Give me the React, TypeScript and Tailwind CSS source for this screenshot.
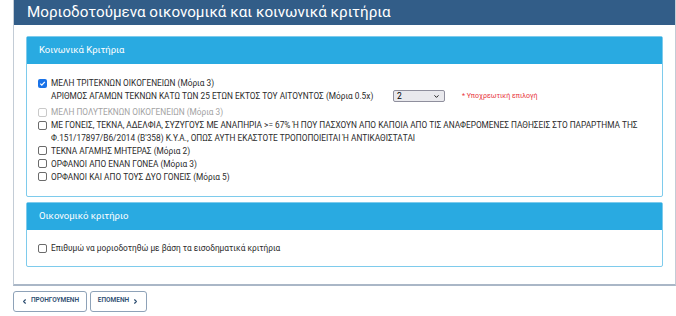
import { ChevronDown, ChevronLeft, ChevronRight } from 'lucide-react';
import type { ReactNode } from 'react';

const FONT = "font-['Roboto','Liberation_Sans',sans-serif]";

function Box({ checked, disabled }: { checked?: boolean; disabled?: boolean }) {
    if (checked) {
        return (
            <span className="mt-[1.5px] flex h-[9px] w-[9px] shrink-0 items-center justify-center rounded-[2px] bg-[#1a73e8]">
                <svg width="7" height="7" viewBox="0 0 10 10">
                    <path d="M1.8 5.2 L4 7.3 L8.3 2.6" fill="none" stroke="white" strokeWidth="1.8" />
                </svg>
            </span>
        );
    }
    return (
        <span
            className={`mt-[1.5px] h-[9px] w-[9px] shrink-0 rounded-[2px] border bg-white ${
                disabled ? 'border-[#c9c9c9]' : 'border-[#6b6b6b]'
            }`}
        />
    );
}

function Row({ checked, disabled, children }: { checked?: boolean; disabled?: boolean; children: ReactNode }) {
    return (
        <div className="flex items-start gap-[4px]">
            <Box checked={checked} disabled={disabled} />
            <span className={`whitespace-nowrap ${disabled ? 'text-[#a3a3a3]' : 'text-[#2b2b2b]'}`}>{children}</span>
        </div>
    );
}

function Panel({ title, children }: { title: string; children: ReactNode }) {
    return (
        <div className="rounded-[2px] border border-[#7ecbec]">
            <div className="flex h-[27px] items-center bg-[#29aae1] pl-[12px] text-[9.5px] text-white">{title}</div>
            {children}
        </div>
    );
}

export default function App() {
    return (
        <div className={`h-[316px] w-[676px] overflow-hidden bg-white ${FONT}`}>
            <div className="ml-[13px] border-x border-b-2 border-[#c3ccd6] border-b-[#aab7c7]">
                <div className="flex h-[25px] items-center bg-[#325d88] pl-[13px] text-[15.2px] text-white">
                    Μοριοδοτούμενα οικονομικά και κοινωνικά κριτήρια
                </div>
                <div className="flex flex-col gap-[5px] px-[12px] pb-[17px] pt-[11px]">
                    <Panel title="Κοινωνικά Κριτήρια">
                        <div className="flex flex-col gap-[0.5px] px-[11px] pb-[13px] pt-[13px] text-[8.3px] leading-[12.5px]">
                            <Row checked>ΜΕΛΗ ΤΡΙΤΕΚΝΩΝ ΟΙΚΟΓΕΝΕΙΩΝ (Μόρια 3)</Row>
                            <div className="mb-[3px] flex items-center pl-[13px] text-[#2b2b2b]">
                                <span className="w-[342px] whitespace-nowrap">
                                    ΑΡΙΘΜΟΣ ΑΓΑΜΩΝ ΤΕΚΝΩΝ ΚΑΤΩ ΤΩΝ 25 ΕΤΩΝ ΕΚΤΟΣ ΤΟΥ ΑΙΤΟΥΝΤΟΣ (Μόρια 0.5x)
                                </span>
                                <div className="flex h-[12px] w-[52px] items-center justify-between rounded-[2px] border border-[#8f8f9d] bg-[#e9e9ed] pl-[3px] pr-[4px] text-[8.5px] text-black">
                                    <span>2</span>
                                    <ChevronDown size={7} strokeWidth={3} />
                                </div>
                                <span className="ml-[17px] text-[7px] text-[#e8343c]">* Υποχρεωτική επιλογή</span>
                            </div>
                            <Row disabled>ΜΕΛΗ ΠΟΛΥΤΕΚΝΩΝ ΟΙΚΟΓΕΝΕΙΩΝ (Μόρια 3)</Row>
                            <Row>
                                ΜΕ ΓΟΝΕΙΣ, ΤΕΚΝΑ, ΑΔΕΛΦΙΑ, ΣΥΖΥΓΟΥΣ ΜΕ ΑΝΑΠΗΡΙΑ &gt;= 67% Ή ΠΟΥ ΠΑΣΧΟΥΝ ΑΠΟ ΚΑΠΟΙΑ ΑΠΟ ΤΙΣ
                                ΑΝΑΦΕΡΟΜΕΝΕΣ ΠΑΘΗΣΕΙΣ ΣΤΟ ΠΑΡΑΡΤΗΜΑ ΤΗΣ
                                <br />
                                Φ.151/17897/Β6/2014 (Β'358) Κ.Υ.Α., ΟΠΩΣ ΑΥΤΗ ΕΚΑΣΤΟΤΕ ΤΡΟΠΟΠΟΙΕΙΤΑΙ Ή ΑΝΤΙΚΑΘΙΣΤΑΤΑΙ
                            </Row>
                            <Row>ΤΕΚΝΑ ΑΓΑΜΗΣ ΜΗΤΕΡΑΣ (Μόρια 2)</Row>
                            <Row>ΟΡΦΑΝΟΙ ΑΠΟ ΕΝΑΝ ΓΟΝΕΑ (Μόρια 3)</Row>
                            <Row>ΟΡΦΑΝΟΙ ΚΑΙ ΑΠΟ ΤΟΥΣ ΔΥΟ ΓΟΝΕΙΣ (Μόρια 5)</Row>
                        </div>
                    </Panel>
                    <Panel title="Οικονομικό κριτήριο">
                        <div className="px-[11px] pb-[11px] pt-[12px] text-[8.3px] leading-[12.5px]">
                            <Row>Επιθυμώ να μοριοδοτηθώ με βάση τα εισοδηματικά κριτήρια</Row>
                        </div>
                    </Panel>
                </div>
            </div>
            <div className="ml-[13px] mt-[5px] flex gap-[3px]">
                <button
                    type="button"
                    className="flex h-[21px] w-[74px] items-center justify-center gap-[3px] rounded-[3px] border border-[#8ea2b8] text-[6.5px] font-semibold text-[#2d4d70]"
                >
                    <ChevronLeft size={7} strokeWidth={4} />
                    ΠΡΟΗΓΟΥΜΕΝΗ
                </button>
                <button
                    type="button"
                    className="flex h-[21px] w-[57px] items-center justify-center gap-[3px] rounded-[3px] border border-[#8ea2b8] text-[6.5px] font-semibold text-[#2d4d70]"
                >
                    ΕΠΟΜΕΝΗ
                    <ChevronRight size={7} strokeWidth={4} />
                </button>
            </div>
        </div>
    );
}
